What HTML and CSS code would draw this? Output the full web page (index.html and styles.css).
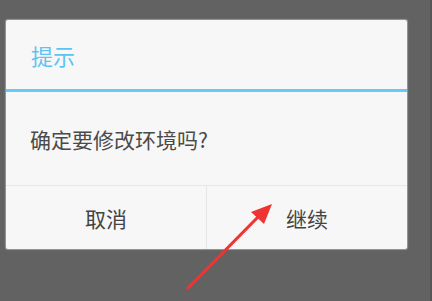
FILE: index.html
```html
<!DOCTYPE html>
<html lang="zh-CN">
<head>
<meta charset="utf-8">
<link rel="stylesheet" href="styles.css">
</head>
<body>
<div class="screen">
  <div class="dialog">
    <div class="title">提示</div>
    <div class="accent"></div>
    <div class="message">确定要修改环境吗?</div>
    <div class="buttons">
      <div class="btn">取消</div>
      <div class="btn">继续</div>
    </div>
  </div>
  <svg class="arrow" width="432" height="301" viewBox="0 0 432 301">
    <line x1="188" y1="288" x2="260" y2="215" stroke="#f03434" stroke-width="3.2" stroke-linecap="round"/>
    <polygon points="272,204 251,212 264,224" fill="#f03434"/>
  </svg>
  <div class="edge"></div>
</div>
</body>
</html>
```
FILE: styles.css
```css
html, body {
  margin: 0;
  padding: 0;
  background: #626262;
}
.screen {
  position: relative;
  width: 432px;
  height: 301px;
  overflow: hidden;
  padding-top: 20px;
  box-sizing: border-box;
  font-family: "Noto Sans CJK SC", "Noto Sans", sans-serif;
}
.dialog {
  margin-left: 6px;
  width: 401px;
  height: 229px;
  background: #f7f7f7;
  border-radius: 2px;
  box-shadow: 0 0 1px 1px #9a9a9a;
  display: flex;
  flex-direction: column;
}
.title {
  height: 69px;
  display: flex;
  align-items: center;
  padding-left: 25px;
  font-size: 22px;
  color: #5cc4f3;
  line-height: 1;
}
.accent {
  height: 3px;
  background: #67c9f6;
}
.message {
  height: 94px;
  display: flex;
  align-items: center;
  padding-left: 24px;
  font-size: 21px;
  color: #4a4a4a;
  line-height: 1;
  border-bottom: 1px solid #e6e6e6;
  box-sizing: border-box;
  padding-top: 2px;
}
.buttons {
  flex: 1;
  display: flex;
}
.btn {
  flex: 1;
  display: flex;
  align-items: center;
  justify-content: center;
  font-size: 21px;
  color: #444444;
  line-height: 1;
  padding-top: 2px;
}
.btn + .btn {
  border-left: 1px solid #e6e6e6;
}
.arrow {
  position: absolute;
  left: 0;
  top: 0;
}
.edge {
  position: absolute;
  right: 0;
  top: 0;
  width: 2px;
  height: 301px;
  background: #555555;
}
```
